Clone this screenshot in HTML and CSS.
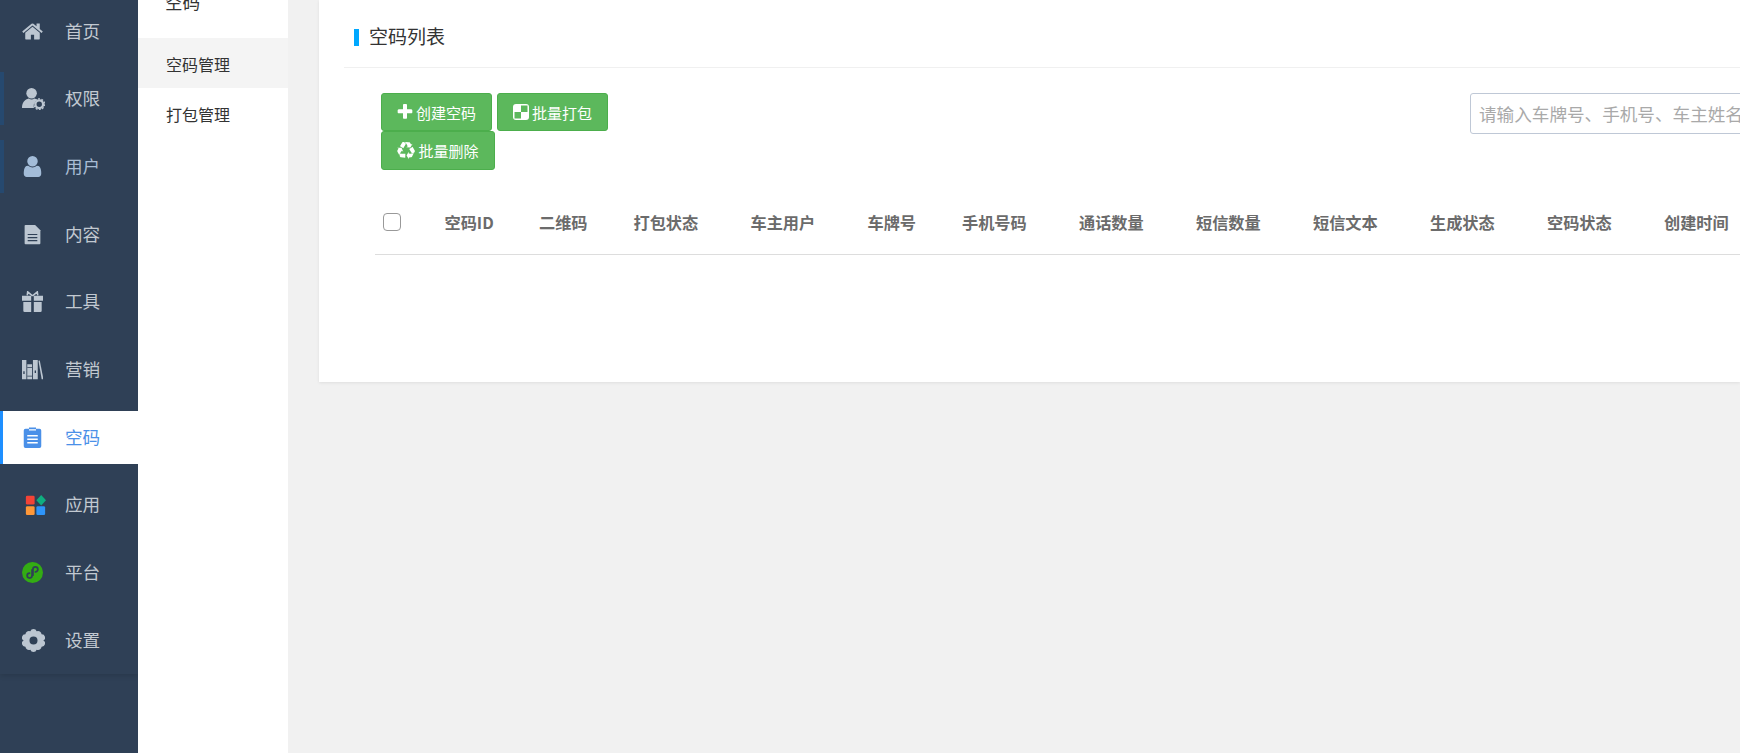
FILE: index.html
```html
<!DOCTYPE html>
<html lang="zh-CN">
<head>
<meta charset="utf-8">
<title>空码管理</title>
<link rel="stylesheet" href="styles.css">
</head>
<body>
<div class="app">
  <aside class="rail">
    <ul class="rail-list">
      <li class="rail-item"><svg class="ico" viewBox="64 128 1664 1536"><path fill="currentColor" d="M1472 992v480q0 26-19 45t-45 19h-384v-384h-256v384h-384q-26 0-45-19t-19-45v-480q0-1 .5-3t.5-3l575-474 575 474q1 2 1 6zm223-69l-62 74q-8 9-21 11h-3q-13 0-21-7l-692-577-692 577q-12 8-24 7-13-2-21-11l-62-74q-8-10-7-23.5t11-21.5l719-599q32-26 76-26t76 26l244 204v-195q0-14 9-23t23-9h192q14 0 23 9t9 23v408l219 182q10 8 11 21.5t-7 23.5z"/></svg><span>首页</span></li>
      <li class="rail-item rail-marked"><svg class="ico ico-cog" viewBox="0 0 24 24"><circle cx="10" cy="6.500" r="5.500" fill="currentColor"/><path fill="currentColor" d="M0 22c0-6 3-9 7-10 2 1.400 4 1.400 6 0 1 .3 2 .8 2.800 1.500A7 7 0 0 0 12.500 22z"/><circle cx="18" cy="18" r="4" fill="none" stroke="currentColor" stroke-width="2.400"/><circle cx="18" cy="18" r="5.600" fill="none" stroke="currentColor" stroke-width="1.400" stroke-dasharray="2 1.500"/></svg><span>权限</span></li>
      <li class="rail-item rail-marked rail-tinted"><svg class="ico" viewBox="256 128 1280 1536"><path fill="currentColor" d="M1536 1399q0 109-62.500 187t-150.500 78h-854q-88 0-150.500-78t-62.500-187q0-85 8.500-160.500t31.500-152 58.500-131 94-89 134.500-34.500q131 128 313 128t313-128q76 0 134.500 34.500t94 89 58.500 131 31.500 152 8.500 160.500zm-256-887q0 159-112.500 271.500t-271.500 112.500-271.500-112.500-112.500-271.500 112.500-271.500 271.500-112.500 271.500 112.500 112.500 271.500z"/></svg><span>用户</span></li>
      <li class="rail-item"><svg class="ico" viewBox="0 0 24 24"><path fill="currentColor" d="M3 2a1 1 0 0 1 1-1h11l6 6v15a1 1 0 0 1-1 1H4a1 1 0 0 1-1-1z"/><path fill="none" stroke="#2f4056" stroke-width="1.300" d="M6.500 12h11M6.500 15.500h11M6.500 19h11"/></svg><span>内容</span></li>
      <li class="rail-item"><svg class="ico" viewBox="0 0 24 24"><path fill="currentColor" d="M0 5.500h10.500v5.500H0zM13.500 5.500H24v5.500H13.500zM1.500 12.500h9V24H3a1.500 1.500 0 0 1-1.500-1.500zM13.500 12.500h9v10A1.500 1.500 0 0 1 21 24h-7.500z"/><path fill="none" stroke="currentColor" stroke-width="1.800" d="M12 5.500L6.500 1 6 5M12 5.500L17.500 1 18 5"/></svg><span>工具</span></li>
      <li class="rail-item"><svg class="ico" viewBox="0 0 24 24"><path fill="currentColor" d="M0 1h5v22H0zM6 6h5.500v17H6zM12.500 1H18v22h-5.500z"/><path fill="currentColor" d="M18.800 2l1.500-.4L24.500 23h-2z"/><path fill="#2f4056" d="M1.500 14h1.500v3H1.500zM14.500 13h1.500v3h-1.500zM6 9h5.500v1H6zM6 19h5.500v1H6z"/></svg><span>营销</span></li>
      <li class="rail-item rail-active"><svg class="ico" viewBox="0 0 24 24"><path fill="#4a90e8" d="M2 4a2 2 0 0 1 2-2h4V.5h8V2h4a2 2 0 0 1 2 2v18a2 2 0 0 1-2 2H4a2 2 0 0 1-2-2z"/><path fill="#fff" d="M8 2.500h8v1.600H8zM6 9h12v1.800H6zM6 13h12v1.800H6zM6 17h12v1.800H6z"/></svg><span>空码</span></li>
      <li class="rail-item"><svg class="ico ico-apps" viewBox="0 0 24 24"><rect x="1" y="2" width="10" height="10" rx="1.500" fill="#f44336"/><path fill="#0fae7f" d="M18.500 1l5.500 6-5.500 6L13 7z"/><rect x="1" y="14" width="10" height="10" rx="1.500" fill="#ff9838"/><rect x="13" y="14" width="10" height="10" rx="1.500" fill="#2e95fa"/></svg><span>应用</span></li>
      <li class="rail-item"><svg class="ico" viewBox="0 0 24 24"><circle cx="12" cy="12" r="12" fill="#33ac13"/><path fill="none" stroke="#2f4056" stroke-width="2" stroke-linecap="round" d="M11.500 9v6.500a2.800 2.800 0 1 1-2.800-2.800M12.500 15V8.500a2.800 2.800 0 1 1 2.800 2.800"/></svg><span>平台</span></li>
      <li class="rail-item"><svg class="ico ico-cog" viewBox="0 0 24 24"><path fill="currentColor" fill-rule="evenodd" d="M12 0a3.500 3.500 0 0 1 3.300 2.400 3.500 3.500 0 0 1 5.100 3 3.500 3.500 0 0 1 1.800 6.600 3.500 3.500 0 0 1-1.800 6.600 3.500 3.500 0 0 1-5.100 3 3.500 3.500 0 0 1-6.600 0 3.500 3.500 0 0 1-5.100-3A3.500 3.500 0 0 1 1.800 12a3.500 3.500 0 0 1 1.800-6.600 3.500 3.500 0 0 1 5.100-3A3.500 3.500 0 0 1 12 0zm0 7.800a4.200 4.200 0 1 0 0 8.400 4.200 4.200 0 0 0 0-8.400z"/></svg><span>设置</span></li>
    </ul>
  </aside>

  <nav class="subnav">
    <div class="subnav-title">空码</div>
    <a class="subnav-link subnav-current">空码管理</a>
    <a class="subnav-link">打包管理</a>
  </nav>

  <main class="main">
    <section class="panel">
      <header class="panel-head"><h2 class="panel-title">空码列表</h2></header>
      <div class="toolbar">
        <div class="btn-group">
          <button class="btn"><svg class="btn-ico" viewBox="128 128 1536 1536"><path fill="currentColor" d="M1600 736v192q0 40-28 68t-68 28h-416v416q0 40-28 68t-68 28h-192q-40 0-68-28t-28-68v-416h-416q-40 0-68-28t-28-68v-192q0-40 28-68t68-28h416v-416q0-40 28-68t68-28h192q40 0 68 28t28 68v416h416q40 0 68 28t28 68z"/></svg>创建空码</button>
          <button class="btn"><svg class="btn-ico" viewBox="0 0 16 16"><rect width="16" height="16" rx="3" fill="#fff"/><path fill="#5cb85c" d="M8 1.500h6.500V8H8zM1.500 8H8v6.500H1.500z"/></svg>批量打包</button>
          <button class="btn btn-wide"><svg class="btn-ico btn-ico-big" viewBox="0 0 1792 1792"><path fill="currentColor" d="M836 1169l-15 368-2 22-420-29q-36-3-67-31.500t-47-65.500q-11-27-14.500-55t4-65 12-55 21.500-64 19-53q78 12 509 28zm-387-586l180 379-147-92q-63 72-111.500 144.500t-72.500 125-39.500 94.500-18.500 63l-4 21-190-357q-17-26-18-56t6-47l8-18q35-63 114-188l-140-86zm1231 517l-188 359q-12 29-36.500 46.500t-43.500 20.500l-18 4q-71 7-219 12l8 164-230-367 211-362 7 173q170 16 283 5t170-33zm-785-924q-47 63-265 435l-317-187-19-12 225-356q20-31 60-45t80-10q24 2 48.500 12t42 21 41.500 33 36 34.500 36 39.500 32 35zm655 307l212 363q18 37 12.500 76t-27.500 74q-13 20-33 37t-38 28-48.500 22-47 16-51.500 14-46 12q-34-72-265-436l313-195zm-143-226l142-83-220 373-419-20 151-86q-34-89-75-166t-75.500-123.500-64.500-80-47-46.500l-17-13 405 1q31-3 58 10.500t39 28.500l11 15q39 61 112 190z"/></svg>批量删除</button>
        </div>
        <input class="search" type="text" placeholder="请输入车牌号、手机号、车主姓名">
      </div>
      <table class="grid">
        <thead>
          <tr>
            <th class="col-check"><input class="check" type="checkbox"></th>
            <th class="col-short">空码ID</th>
            <th class="col-short">二维码</th>
            <th>打包状态</th>
            <th>车主用户</th>
            <th class="col-short">车牌号</th>
            <th>手机号码</th>
            <th>通话数量</th>
            <th>短信数量</th>
            <th>短信文本</th>
            <th>生成状态</th>
            <th>空码状态</th>
            <th>创建时间</th>
          </tr>
        </thead>
      </table>
    </section>
  </main>
</div>
</body>
</html>
```
FILE: styles.css
```css
* { box-sizing: border-box; }
html, body { margin: 0; height: 100%; overflow: hidden; }
body {
  font-family: "Noto Sans CJK SC", "Liberation Sans", sans-serif;
  background: #f1f1f1;
  color: #333;
}
.app { display: flex; height: 753px; }

.rail { flex: 0 0 138px; background: #2f4056; }
.rail-list {
  list-style: none;
  margin: 0;
  padding: 4.5px 0 7px;
  display: flex;
  flex-direction: column;
  gap: 14.7px;
  box-shadow: 0 2px 5px rgba(0, 0, 0, .12);
}
.rail-item {
  height: 53px;
  display: flex;
  align-items: center;
  gap: 22px;
  padding-left: 22px;
  font-size: 17.6px;
  color: #c2c9d1;
}
.rail-item span { position: relative; top: -1px; }
.ico { width: 21px; height: 21px; flex: none; color: #bcc6d1; }
.ico-cog { width: 23px; height: 23px; margin-right: -2px; }
.ico-apps { width: 21px; height: 21px; margin-left: 3px; margin-right: -3px; }
.rail-marked { box-shadow: inset 4px 0 0 #26496f; }
.rail-tinted .ico { color: #a3bcd8; }
.rail-tinted { color: #a9bdd4; }
.rail-active { background: #fff; color: #4a90e8; box-shadow: inset 3px 0 0 #1e8fff; }

.subnav { flex: 0 0 150px; background: #fff; }
.subnav-title {
  margin-top: -10px;
  height: 48px;
  padding-left: 27px;
  font-size: 17.6px;
  line-height: 24px;
}
.subnav-link {
  display: block;
  height: 50px;
  padding: 1px 0 0 28px;
  font-size: 16px;
  line-height: 50px;
  color: #333;
}
.subnav-current { background: #f4f4f4; }

.main { flex: 1; min-width: 0; padding-left: 31px; }
.panel {
  background: #fff;
  height: 382px;
  box-shadow: 0 1px 3px rgba(0, 0, 0, .08);
  overflow: hidden;
}
.panel-head {
  margin-left: 25px;
  height: 68px;
  padding: 26px 0 0 10px;
  border-bottom: 1px solid #f0f0f0;
}
.panel-title {
  margin: 0;
  height: 24px;
  padding-left: 15px;
  font-size: 19px;
  line-height: 20px;
  font-weight: 400;
  color: #333;
  position: relative;
}
.panel-title::before {
  content: "";
  position: absolute;
  left: 0;
  top: 3px;
  width: 5px;
  height: 17px;
  background: #00a8ff;
}

.toolbar { display: flex; padding: 25px 0 0 62px; height: 102px; }
.btn-group {
  flex: 0 0 1089px;
  display: flex;
  flex-wrap: wrap;
  align-content: flex-start;
  column-gap: 5px;
  padding-right: 850px;
}
.btn {
  width: 111px;
  height: 38px;
  display: inline-flex;
  align-items: center;
  justify-content: center;
  gap: 3px;
  padding: 0;
  font: inherit;
  font-size: 15px;
  color: #fff;
  background: #5cb85c;
  border: 1px solid #4cae4c;
  border-radius: 3px;
}
.btn-wide { width: 114px; height: 39px; }
.btn-ico { width: 16px; height: 16px; }
.btn-ico-big { width: 18px; height: 18px; }
.search {
  flex: 0 0 320px;
  height: 41px;
  padding: 0 8px;
  font: inherit;
  font-size: 17.6px;
  border: 1px solid #bfc8d6;
  border-radius: 3px;
  outline: none;
}
.search::placeholder { color: #a9a9a9; }

.grid {
  margin: 22px 0 0 56px;
  border-collapse: collapse;
  table-layout: fixed;
  width: 1365px;
  border-bottom: 1px solid #ddd;
}
.grid th {
  width: 117px;
  height: 62px;
  padding: 0 0 2px 0;
  text-align: left;
  font-size: 16.2px;
  font-weight: 700;
  color: #6b6b6b;
  white-space: nowrap;
}
.grid .col-check { width: 69.5px; padding-left: 8px; }
.grid .col-short { width: 94.5px; }
.check {
  appearance: none;
  display: block;
  margin: 0;
  width: 18px;
  height: 18px;
  background: #fff;
  border: 1.5px solid #999;
  border-radius: 4px;
}
```
